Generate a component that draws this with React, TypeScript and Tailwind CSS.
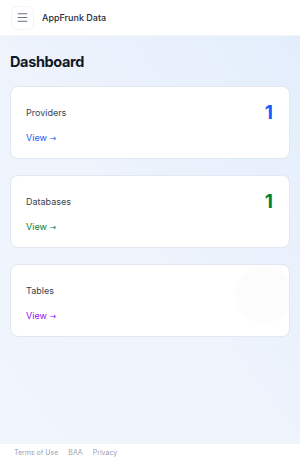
import { Menu } from "lucide-react"

interface StatCard {
  label: string
  count?: number
  accent: string
  link: string
  blob?: boolean
}

const cards: StatCard[] = [
  { label: 'Providers', count: 1, accent: 'text-blue-600', link: 'text-blue-600' },
  { label: 'Databases', count: 1, accent: 'text-green-700', link: 'text-green-700' },
  { label: 'Tables', accent: 'text-purple-600', link: 'text-purple-600', blob: true },
]

const App = () => {
  return (
    <div className="min-h-[463px] flex flex-col font-['Inter','Liberation_Sans',sans-serif] text-gray-900">
      <header className="h-9 flex items-center gap-2 px-[11px] bg-white border-b border-gray-100">
        <button className="w-[23px] h-6 flex items-center justify-center rounded-md border border-gray-100 text-gray-500">
          <Menu size={13} strokeWidth={2} />
        </button>
        <span className="text-[9px] font-medium text-gray-800">AppFrunk Data</span>
      </header>

      <main className="flex-1 bg-gradient-to-bl from-[#e3eefc] via-[#eef3fc] to-[#f1f5fc] px-2.5 pt-[17px] pb-6">
        <h1 className="text-[14.5px] leading-[18px] font-bold tracking-tight">Dashboard</h1>
        <div className="mt-[15px] flex flex-col gap-4">
          {cards.map(card => (
            <div
              key={card.label}
              className="relative overflow-hidden bg-white rounded-lg border border-[#e2e8f0] pl-[15px] pr-4 pt-3.5 pb-[15px] h-[73px]"
            >
              {card.blob && (
                <div className="absolute -right-1 top-0 w-[58px] h-[58px] rounded-full bg-[#fcfcfd]" />
              )}
              <div className="relative h-6 flex items-center justify-between">
                <span className="text-[9px] text-gray-700">{card.label}</span>
                {card.count !== undefined && (
                  <span className={`text-[19px] font-bold ${card.accent}`}>{card.count}</span>
                )}
              </div>
              <div className={`relative mt-[7px] text-[9px] leading-3 ${card.link}`}>
                View <span className="font-['DejaVu_Sans',sans-serif] text-[8px]">→</span>
              </div>
            </div>
          ))}
        </div>
      </main>

      <footer className="h-5 flex items-center gap-[10px] px-3.5 bg-white border-t border-gray-100 text-[7px] text-gray-400">
        <span>Terms of Use</span>
        <span>BAA</span>
        <span>Privacy</span>
      </footer>
    </div>
  )
}

export default App
